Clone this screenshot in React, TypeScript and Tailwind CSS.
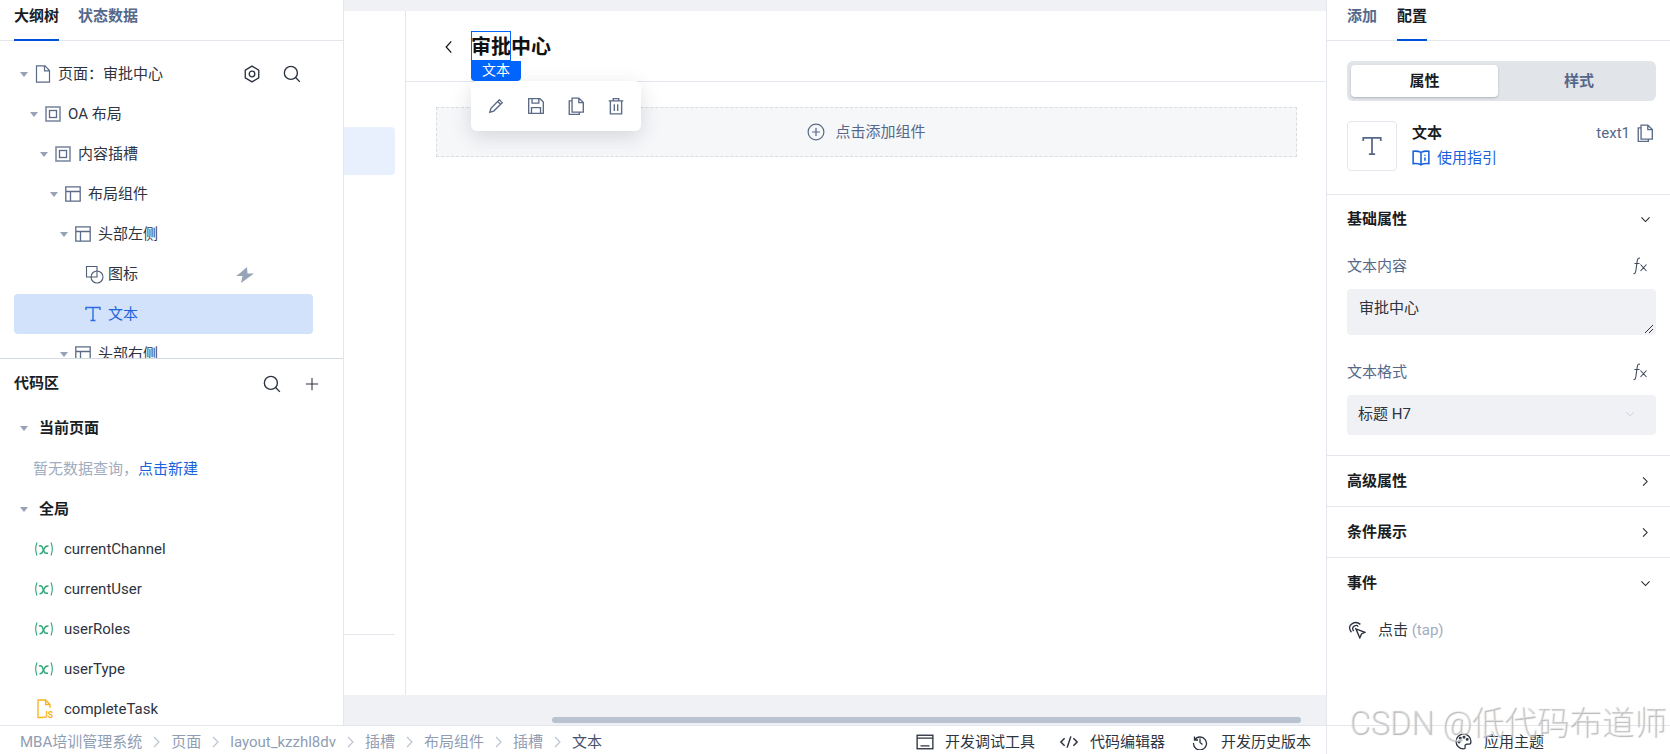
import type { ReactNode } from "react";

const stroke = "#5b6b86";

function Svg({ size = 16, color = stroke, width = 1.2, children }: { size?: number; color?: string; width?: number; children: ReactNode }) {
  return (
    <svg width={size} height={size} viewBox="0 0 16 16" fill="none" stroke={color} strokeWidth={width} className="shrink-0">
      {children}
    </svg>
  );
}

function Caret() {
  return <span className="h-0 w-0 shrink-0 border-x-[4px] border-t-[5px] border-x-transparent border-t-[#96a2b6]" />;
}

const DocIcon = () => (
  <svg width="16" height="18" viewBox="0 0 16 18" fill="none" stroke="#5b6b86" strokeWidth="1.2" className="shrink-0">
    <path d="M1.500 .8h8.500l4.500 4.700v11.700h-13z M9.500 .8v5h5" />
  </svg>
);
const FrameIcon = () => (
  <Svg>
    <rect x="1" y="1" width="14" height="14" strokeWidth="1.600" stroke="#7d8ba3" />
    <rect x="4.500" y="4.500" width="7" height="7" strokeWidth="1.300" />
  </Svg>
);
const LayoutIcon = () => (
  <Svg width={1.300}>
    <path d="M.8 .8h14.400v14.400H.8z M.8 5.500h14.400 M5.500 5.500v9.700" />
  </Svg>
);
const ShapesIcon = () => (
  <svg width="19" height="19" viewBox="0 0 19 19" fill="none" stroke="#4f5d75" strokeWidth="1.100" className="shrink-0">
    <path d="M7 12H1.500V1.500H12V6" />
    <circle cx="12" cy="12" r="6" />
    <path d="M6 12h6V6" />
  </svg>
);
const TextIcon = ({ color = "#2b6de0", size = 16 }: { color?: string; size?: number }) => (
  <Svg color={color} size={size} width={1.400}>
    <path d="M1 4V1.500h14V4 M8 1.500v13 M5.500 14.500h5" />
  </Svg>
);
const SearchIcon = () => (
  <Svg size={18} color="#2c3340" width={1.200}>
    <circle cx="7" cy="7" r="5.800" />
    <path d="M11.200 11.200L15 15" />
  </Svg>
);
const CopyIcon = ({ size = 18 }: { size?: number }) => (
  <Svg size={size} width={1.200}>
    <path d="M4.500 1h6l4 4v8.500h-10z M10.500 1v4h4 M4.500 3.500H2v12h9v-2" />
  </Svg>
);
const Chevron = ({ dir }: { dir: "left" | "right" | "down" | "crumb" }) => {
  if (dir === "left") return <Svg size={18} color="#111" width={1.100}><path d="M10 3L5.500 8l4.500 5" /></Svg>;
  if (dir === "right") return <Svg size={13} color="#222" width={1.300}><path d="M5 3l5 5-5 5" /></Svg>;
  if (dir === "down") return <Svg size={13} color="#222" width={1.300}><path d="M3 5.500l5 5 5-5" /></Svg>;
  return <svg width="7" height="12" viewBox="0 0 7 12" fill="none" stroke="#b8c2d1" strokeWidth="1.100" className="shrink-0"><path d="M1 1l5 5-5 5" /></svg>;
};
const VarIcon = () => (
  <svg width="20" height="16" viewBox="0 0 20 16" fill="none" stroke="#2ea67a" className="shrink-0">
    <path d="M3 1.500Q.4 8 3 14.500 M17 1.500Q19.600 8 17 14.500" strokeWidth="1.100" />
    <path d="M5 5q2.500-1 3.500 1.500l1.500 4q1 2.500 4 1.500" strokeWidth="1.500" />
    <path d="M5.500 12.800q2.300.2 3.500-2.800l1.500-3q1-2.300 4-2" strokeWidth="1.500" />
  </svg>
);
const JsIcon = () => (
  <svg width="16" height="20" viewBox="0 0 16 20" fill="none" stroke="#f7b21c" strokeWidth="1.300" className="shrink-0">
    <path d="M6 18.500H1V1h7.500L13 5.500V9 M8.500 1v4.500H13" />
    <text x="6" y="18.800" fontSize="8.500" fontWeight="700" fill="#f7b21c" stroke="none" fontFamily="Roboto">JS</text>
  </svg>
);
const FxIcon = () => (
  <svg width="16" height="18" viewBox="0 0 16 18" fill="none" stroke="#3f4a5e" strokeWidth="1.100" className="shrink-0">
    <path d="M8 1.200Q5.800 .4 5.300 3.500L3.800 14Q3.300 17 1.500 16.500 M2.500 6.500H7.500 M8.500 7.500l6 6.500 M14.500 7.500l-6 6.500" />
  </svg>
);

const tree = [
  { depth: 0, label: "页面：审批中心", icon: <DocIcon /> },
  { depth: 1, label: "OA 布局", icon: <FrameIcon /> },
  { depth: 2, label: "内容插槽", icon: <FrameIcon /> },
  { depth: 3, label: "布局组件", icon: <LayoutIcon /> },
  { depth: 4, label: "头部左侧", icon: <LayoutIcon /> },
  { depth: 5, label: "图标", icon: <ShapesIcon />, leaf: true },
  { depth: 5, label: "文本", icon: <TextIcon />, leaf: true, active: true },
  { depth: 4, label: "头部右侧", icon: <LayoutIcon /> },
];

const paddings = ["pl-[6px]", "pl-[16px]", "pl-[26px]", "pl-[36px]", "pl-[46px]", "pl-[71px]"];

const crumbs = ["MBA培训管理系统", "页面", "layout_kzzhl8dv", "插槽", "布局组件", "插槽"];

function LeftPanel() {
  return (
    <aside className="flex w-[344px] shrink-0 flex-col border-r border-[#e3e6ec] bg-white">
      <div className="flex h-[41px] shrink-0 gap-[19px] border-b border-[#e3e6ec] pl-[14px] text-[15px] font-semibold">
        <div className="h-[41px] border-b-2 border-[#0052d9] pt-[5px] text-[#1a1d24]">大纲树</div>
        <div className="pt-[5px] text-[#56688a]">状态数据</div>
      </div>
      <div className="h-[317px] shrink-0 overflow-hidden pt-[13px]">
        {tree.map((row) => (
          <div
            key={row.label}
            className={`relative mx-[14px] flex h-10 w-[299px] items-center rounded ${paddings[row.depth]} ${row.active ? "bg-[#d2e2fb] text-[#1f63dc]" : "text-[#2d3340]"}`}
          >
            {!row.leaf && <Caret />}
            <span className={row.leaf ? "flex w-[23px] items-center" : "ml-[7px] mr-[7px] flex w-[16px] items-center"}>{row.icon}</span>
            <span className="text-[15px]">{row.label}</span>
            {row.depth === 0 && (
              <div className="absolute right-[12px] flex items-center gap-[22px]">
                <Svg size={18} color="#2c3340" width={1.200}>
                  <path d="M8 1l6 3.500v7L8 15l-6-3.500v-7z" />
                  <circle cx="8" cy="8" r="2.500" />
                </Svg>
                <SearchIcon />
              </div>
            )}
            {row.label === "图标" && (
              <svg width="18" height="16" viewBox="0 0 18 16" fill="#97a3b6" className="absolute left-[222px] top-[13px]">
                <path d="M11 0L3.500 6.500 0 9h6.500L5 16l13-9.500h-6.500z" />
              </svg>
            )}
          </div>
        ))}
      </div>
      <div className="flex-1 overflow-hidden border-t border-[#d5dbe5]">
        <div className="flex h-[49px] items-center justify-between pl-[14px] pr-[24px]">
          <span className="text-[15px] font-semibold text-[#1a1d24]">代码区</span>
          <div className="flex items-center gap-[24px]">
            <SearchIcon />
            <Svg size={14} color="#2c3340"><path d="M8 1v14 M1 8h14" /></Svg>
          </div>
        </div>
        <div className="flex h-[41px] items-center gap-[11px] pl-[20px] text-[15px] font-semibold text-[#1a1d24]">
          <Caret />
          当前页面
        </div>
        <div className="flex h-[40px] items-center pl-[33px] text-[15px] text-[#a1adc0]">
          暂无数据查询，<span className="text-[#1a62dc]">点击新建</span>
        </div>
        <div className="flex h-[40px] items-center gap-[11px] pl-[20px] text-[15px] font-semibold text-[#1a1d24]">
          <Caret />
          全局
        </div>
        {["currentChannel", "currentUser", "userRoles", "userType"].map((name) => (
          <div key={name} className="flex h-10 items-center gap-[10px] pl-[34px] text-[15px] text-[#2d3340]">
            <VarIcon />
            {name}
          </div>
        ))}
        <div className="flex h-10 items-center gap-[11px] pl-[37px] text-[15px] text-[#2d3340]">
          <JsIcon />
          completeTask
        </div>
      </div>
    </aside>
  );
}

function Canvas() {
  return (
    <main className="flex min-w-0 flex-1 flex-col bg-[#f0f1f5] pt-[11px]">
      <div className="flex min-h-0 flex-1 bg-white">
        <div className="w-[62px] shrink-0 border-r border-[#e3e6ec] pr-[10px] pt-[116px]">
          <div className="h-12 rounded-r bg-[#e9f0fd]" />
          <div className="mt-[459px] border-t border-[#e3e6ec]" />
        </div>
        <div className="min-w-0 flex-1">
          <div className="flex h-[71px] items-center gap-[13px] border-b border-[#e3e6ec] pl-[34px] pt-[2px]">
            <Chevron dir="left" />
            <div className="relative text-[20px] font-bold leading-[29px] text-[#111]">
              审批中心
              <div className="absolute left-0 top-[-2px] h-[30px] w-[40px] border border-[#0065ff]" />
              <div className="absolute left-0 top-[28px] flex h-5 w-[50px] items-center justify-center rounded-b bg-[#0065ff] text-[14px] font-normal text-white">文本</div>
              <div className="absolute left-0 top-[48px] z-10 flex h-[50px] w-[170px] items-center gap-[22px] rounded-md bg-white pl-[16px] shadow-[0_6px_20px_rgba(60,70,90,0.18)]">
                <Svg size={18}><path d="M2.500 13.500l1-3.500L11 2.500l2.500 2.500L6 12.500z M9.500 4l2.500 2.500" /></Svg>
                <Svg size={18}><path d="M1.500 1.500h10l3 3v10h-13z M4.500 1.500v4h6v-4 M4 14.500v-5h8v5" /></Svg>
                <CopyIcon />
                <Svg size={18}><path d="M1.500 3.500h13 M5.500 3.500V1.500h5v2 M3 3.500h10v11.500H3z M6.500 6.500v6 M9.500 6.500v6" /></Svg>
              </div>
            </div>
          </div>
          <div className="ml-[30px] mr-[29px] mt-[25px] flex h-[50px] items-center justify-center gap-[10px] border border-dashed border-[#d9dce1] bg-[#f6f7f9] text-[15px] text-[#56688a]">
            <Svg size={18} width={1.100}><circle cx="8" cy="8" r="7" /><path d="M8 4.500v7 M4.500 8h7" /></Svg>
            点击添加组件
          </div>
        </div>
      </div>
      <div className="h-[30px] shrink-0 pl-[208px] pr-[25px] pt-[22px]">
        <div className="h-[6px] rounded-full bg-[#b9c2cf]" />
      </div>
    </main>
  );
}

function SectionHead({ title, open, short }: { title: string; open?: boolean; short?: boolean }) {
  return (
    <div className={`flex items-center justify-between border-t border-[#e3e6ec] pl-[20px] pr-[18px] text-[15px] font-semibold text-[#1a1d24] ${short ? "h-[49px]" : "h-[51px]"}`}>
      {title}
      <Chevron dir={open ? "down" : "right"} />
    </div>
  );
}

function RightPanel() {
  return (
    <aside className="flex w-[344px] shrink-0 flex-col border-l border-[#e3e6ec] bg-white">
      <div className="flex h-[41px] shrink-0 gap-5 border-b border-[#e3e6ec] pl-[20px] text-[15px] font-semibold">
        <div className="pt-[5px] text-[#56688a]">添加</div>
        <div className="h-[41px] border-b-2 border-[#0052d9] pt-[5px] text-[#1a1d24]">配置</div>
      </div>
      <div className="pl-[20px] pr-[14px]">
        <div className="mt-5 flex h-10 rounded-md bg-[#e1e4e9] p-1 text-[15px] font-semibold">
          <div className="flex w-[147px] items-center justify-center rounded bg-white text-[#1a1d24] shadow-[0_1px_2px_rgba(60,70,90,0.3)]">属性</div>
          <div className="flex flex-1 items-center justify-center pl-[8px] text-[#56688a]">样式</div>
        </div>
        <div className="mb-[23px] mt-5 flex h-[50px] items-start">
          <div className="flex h-[50px] w-[50px] items-center justify-center rounded border border-[#e3e6ec]">
            <TextIcon color="#56688a" size={20} />
          </div>
          <div className="ml-[15px] flex-1">
            <div className="flex h-[24px] items-center justify-between">
              <span className="text-[15px] font-semibold text-[#1a1d24]">文本</span>
              <span className="flex items-center gap-[6px] pr-[2px] text-[15px] text-[#56688a]">
                text1
                <CopyIcon />
              </span>
            </div>
            <div className="flex h-[26px] items-center gap-[7px] text-[15px] text-[#1a62dc]">
              <Svg size={18} color="#1a62dc" width={1.400}>
                <path d="M8 3Q5 1.500 1 2v11q4-.5 7 1 3-1.500 7-1V2q-4-.5-7 1z M8 3v11" />
                <path d="M11.500 5v1 M11.500 7.500v3" />
              </Svg>
              使用指引
            </div>
          </div>
        </div>
      </div>
      <SectionHead title="基础属性" open short />
      <div className="pl-[20px] pr-[14px]">
        <div className="flex h-[46px] items-center justify-between pr-[8px] text-[15px] text-[#56688a]">
          文本内容
          <FxIcon />
        </div>
        <div className="relative h-[46px] rounded bg-[#f0f1f5] pl-3 pt-[8px] text-[15px] text-[#2d3340]">
          审批中心
          <svg width="10" height="10" viewBox="0 0 10 10" stroke="#333" className="absolute bottom-[1px] right-[2px]"><path d="M1 9l8-8 M5 9l4-4" /></svg>
        </div>
        <div className="mt-[17px] flex h-[43px] items-center justify-between pb-[3px] pr-[8px] text-[15px] text-[#56688a]">
          文本格式
          <FxIcon />
        </div>
        <div className="flex h-10 items-center justify-between rounded bg-[#f0f1f5] pb-[2px] pl-[11px] pr-[20px] text-[15px] text-[#2d3340]">
          标题 H7
          <Svg size={12} color="#c5ccd8"><path d="M3 5.500l5 5 5-5" /></Svg>
        </div>
      </div>
      <div className="mt-[20px]">
        <SectionHead title="高级属性" />
        <SectionHead title="条件展示" />
        <SectionHead title="事件" open />
        <div className="flex items-center gap-[12px] pl-[21px] pt-[11px] text-[15px] text-[#2d3340]">
          <Svg size={18} color="#2c3340">
            <path d="M3 10Q-.5 5 3.500 2.500T11 3 M5 9Q3 6 5.500 4.500T9 5" />
            <path d="M7 7l8 3-3 1.500-1.500 3.500z" />
          </Svg>
          <span>点击 <span className="text-[#a1adc0]">(tap)</span></span>
        </div>
      </div>
    </aside>
  );
}

function Footer() {
  return (
    <footer className="flex h-[29px] shrink-0 border-t border-[#e3e6ec] bg-white text-[15px] leading-[20px]">
      <div className="flex items-center gap-[11px] pl-[20px] pt-[3px] text-[#8f9db3]">
        {crumbs.map((c, i) => (
          <span key={i} className="flex items-center gap-[11px] whitespace-nowrap">
            {c}
            <Chevron dir="crumb" />
          </span>
        ))}
        <span className="text-[#44526c]">文本</span>
      </div>
      <div className="ml-auto flex items-center pr-[15px] pt-[3px] text-[#2d3340]">
        <Svg size={18} color="#2c3340">
          <rect x="1" y="2" width="14" height="12" />
          <path d="M1 4.500h14 M4 11.500h8" />
        </Svg>
        <span className="ml-[11px]">开发调试工具</span>
        <span className="ml-[24px]">
          <Svg size={20} color="#2c3340"><path d="M4.500 5L1.500 8l3 3 M11.500 5l3 3-3 3 M9.500 3.500l-3 9" /></Svg>
        </span>
        <span className="ml-[11px]">代码编辑器</span>
        <span className="ml-[27px]">
          <Svg size={16} color="#2c3340" width={1.300}><path d="M2.500 2.500v3.500H6 M2.500 6A6.500 6.500 0 1 1 1.500 9 M8 4.500V8.500l2.500 2" /></Svg>
        </span>
        <span className="ml-[13px]">开发历史版本</span>
      </div>
      <div className="flex w-[344px] items-center justify-center gap-[12px] border-l border-[#e3e6ec] pl-[2px] pt-[3px] text-[#2d3340]">
        <Svg size={17} color="#2c3340" width={1.200}>
          <path d="M8 1a7 7 0 1 0 0 14q1.800 0 1.500-2-.5-2.500 2-2.500h2q1.500 0 1.500-2.500C15 4 12 1 8 1z" />
          <circle cx="5" cy="5" r=".8" />
          <circle cx="8.500" cy="4" r=".8" />
          <circle cx="3.800" cy="8.500" r=".8" />
          <circle cx="11.500" cy="6" r=".8" />
        </Svg>
        应用主题
      </div>
    </footer>
  );
}

export default function App() {
  return (
    <div className="relative flex h-[754px] w-[1670px] flex-col overflow-hidden bg-white font-['Roboto','Noto_Sans_CJK_SC',sans-serif]">
      <div className="flex min-h-0 flex-1">
        <LeftPanel />
        <Canvas />
        <RightPanel />
      </div>
      <Footer />
      <div className="absolute left-[1349px] top-[711px] whitespace-nowrap text-[32.5px] font-light leading-[24px] text-[rgba(255,255,255,0.35)] [text-shadow:1px_1px_1px_#b5b5b5]">
        CSDN @低代码布道师
      </div>
    </div>
  );
}
